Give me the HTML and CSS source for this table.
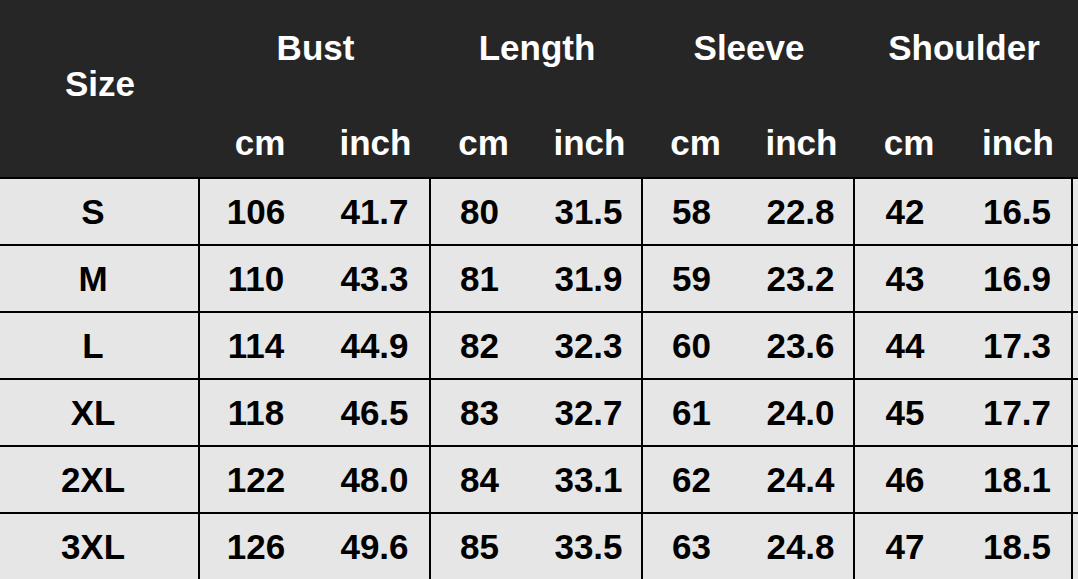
FILE: index.html
```html
<!DOCTYPE html>
<html lang="en">
<head>
<meta charset="utf-8">
<title>Size Chart</title>
<link rel="stylesheet" href="styles.css">
</head>
<body>
<div class="chart">
  <div class="head">
    <div class="h-size">Size</div>
    <div class="h-group g-bust">Bust</div>
    <div class="h-group g-length">Length</div>
    <div class="h-group g-sleeve">Sleeve</div>
    <div class="h-group g-shoulder">Shoulder</div>
    <div class="h-unit">cm</div><div class="h-unit">inch</div>
    <div class="h-unit">cm</div><div class="h-unit">inch</div>
    <div class="h-unit">cm</div><div class="h-unit">inch</div>
    <div class="h-unit">cm</div><div class="h-unit">inch</div>
  </div>
  <div class="row"><div class="c size">S</div><div class="c cm">106</div><div class="c sep">41.7</div><div class="c cm">80</div><div class="c sep">31.5</div><div class="c cm">58</div><div class="c sep">22.8</div><div class="c cm">42</div><div class="c sep">16.5</div><div class="c tail"></div></div>
  <div class="row"><div class="c size">M</div><div class="c cm">110</div><div class="c sep">43.3</div><div class="c cm">81</div><div class="c sep">31.9</div><div class="c cm">59</div><div class="c sep">23.2</div><div class="c cm">43</div><div class="c sep">16.9</div><div class="c tail"></div></div>
  <div class="row"><div class="c size">L</div><div class="c cm">114</div><div class="c sep">44.9</div><div class="c cm">82</div><div class="c sep">32.3</div><div class="c cm">60</div><div class="c sep">23.6</div><div class="c cm">44</div><div class="c sep">17.3</div><div class="c tail"></div></div>
  <div class="row"><div class="c size">XL</div><div class="c cm">118</div><div class="c sep">46.5</div><div class="c cm">83</div><div class="c sep">32.7</div><div class="c cm">61</div><div class="c sep">24.0</div><div class="c cm">45</div><div class="c sep">17.7</div><div class="c tail"></div></div>
  <div class="row"><div class="c size">2XL</div><div class="c cm">122</div><div class="c sep">48.0</div><div class="c cm">84</div><div class="c sep">33.1</div><div class="c cm">62</div><div class="c sep">24.4</div><div class="c cm">46</div><div class="c sep">18.1</div><div class="c tail"></div></div>
  <div class="row"><div class="c size">3XL</div><div class="c cm">126</div><div class="c sep">49.6</div><div class="c cm">85</div><div class="c sep">33.5</div><div class="c cm">63</div><div class="c sep">24.8</div><div class="c cm">47</div><div class="c sep">18.5</div><div class="c tail"></div></div>
</div>
</body>
</html>
```

FILE: styles.css
```css
html, body {
  margin: 0;
  padding: 0;
  background: #e6e6e6;
  overflow: hidden;
}

.chart {
  --cols: 200px 120px 111px 105px 107px 105px 107px 108px 110px 5px;
  width: 1078px;
  font-family: "Liberation Sans", Arial, sans-serif;
  font-weight: bold;
  font-size: 35px;
}

.head {
  display: grid;
  grid-template-columns: var(--cols);
  grid-template-rows: 96px 81px;
  background: #262626;
  color: #ffffff;
  border-bottom: 2px solid #000;
}

.h-size {
  grid-column: 1;
  grid-row: 1 / 3;
  display: flex;
  align-items: center;
  justify-content: center;
  padding-bottom: 9px;
}

.h-group {
  grid-row: 1;
  display: flex;
  align-items: center;
  justify-content: center;
}

.g-bust { grid-column: 2 / 4; }
.g-length { grid-column: 4 / 6; }
.g-sleeve { grid-column: 6 / 8; }
.g-shoulder { grid-column: 8 / 10; }

.h-unit {
  grid-row: 2;
  display: flex;
  align-items: center;
  justify-content: center;
  padding-top: 12px;
}

.row {
  display: grid;
  grid-template-columns: var(--cols);
  height: 67px;
}

.c {
  box-sizing: border-box;
  border-bottom: 2px solid #000;
  display: flex;
  align-items: center;
  justify-content: center;
  color: #000;
}

.size {
  border-right: 2px solid #000;
  padding-right: 12px;
}

.cm {
  padding-right: 8px;
}

.sep {
  border-right: 2px solid #000;
}
```
